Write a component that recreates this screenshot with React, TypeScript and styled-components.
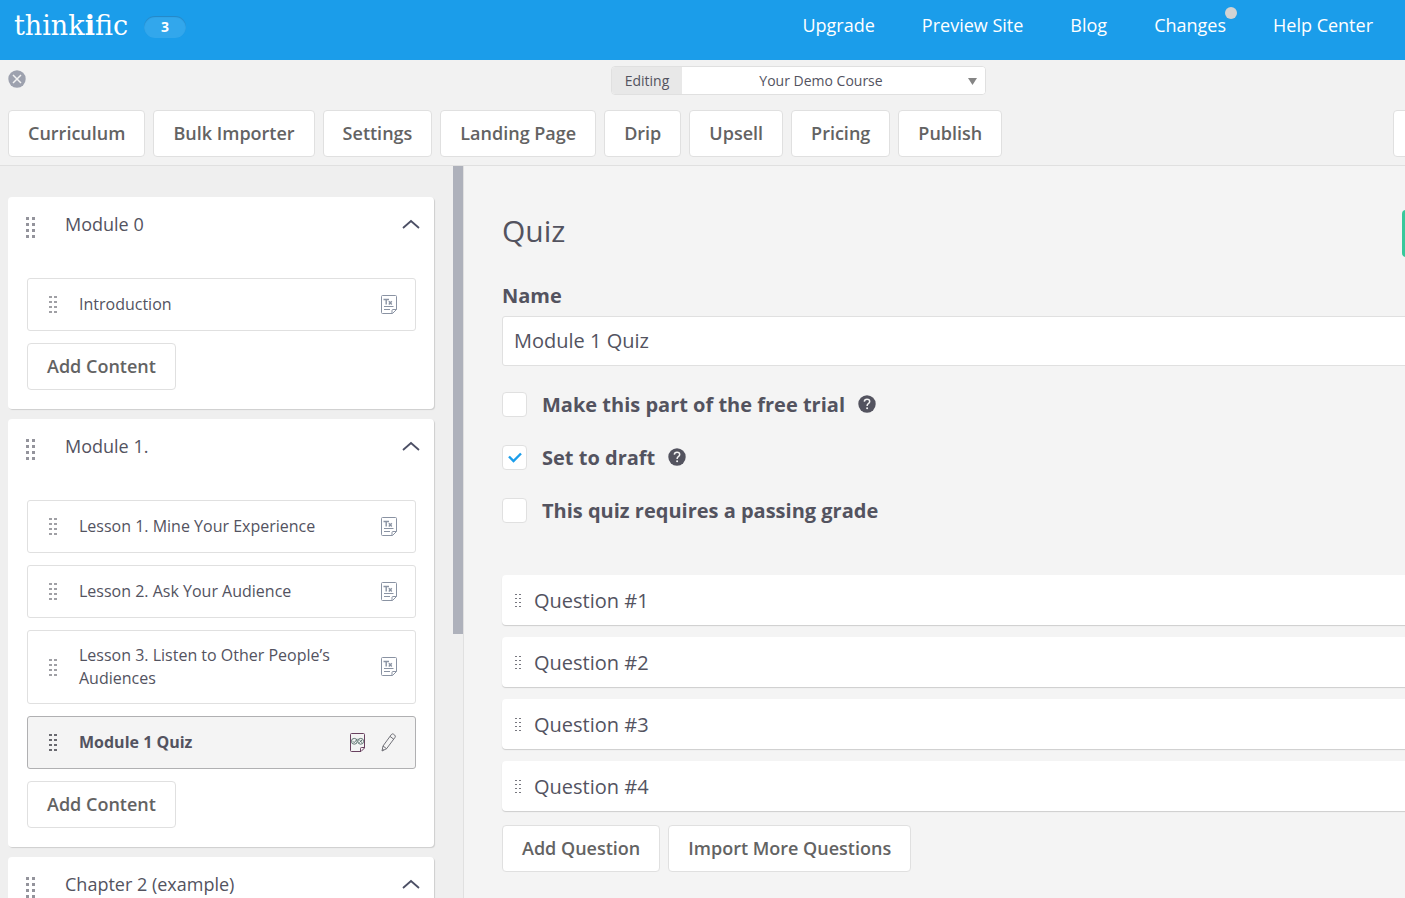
import React, { useState } from "react";
import styled, { createGlobalStyle } from "styled-components";

const Global = createGlobalStyle`
  *, *::before, *::after { box-sizing: border-box; }
  html, body, #root { height: 100%; margin: 0; }
  body { background: #f4f4f4; color: #53535f; font-family: "Open Sans", "Noto Sans", sans-serif; font-size: 16px; }
  button, input, select { font: inherit; color: inherit; margin: 0; }
  h1, h2, ul { margin: 0; padding: 0; }
  svg { display: block; flex: none; }
`;

const Page = styled.div`
  display: flex;
  flex-direction: column;
  height: 100vh;
  overflow: hidden;
`;

const TopBar = styled.header`
  display: flex;
  align-items: flex-start;
  flex: none;
  height: 60px;
  padding: 0 32px 0 14px;
  background: #1b9dea;
  color: #fff;
`;

const Logo = styled.a`
  color: #fff;
  font-family: "DejaVu Serif", serif;
  font-size: 27px;
  line-height: 52px;
  text-decoration: none;
`;

const Count = styled.span`
  width: 42px;
  height: 22px;
  margin: 16px 0 0 16px;
  border-radius: 11px;
  background: #32a7ec;
  box-shadow: inset 0 1px 1px rgba(0, 60, 110, 0.3);
  font-size: 14px;
  font-weight: 700;
  line-height: 22px;
  text-align: center;
`;

const Nav = styled.nav`
  display: flex;
  gap: 47px;
  margin-left: auto;
`;

const NavLink = styled.a`
  position: relative;
  color: #fff;
  font-size: 18px;
  line-height: 50px;
  text-decoration: none;
`;

const Dot = styled.span`
  position: absolute;
  top: 7px;
  right: -11px;
  width: 12px;
  height: 12px;
  border-radius: 50%;
  background: #d3d3d3;
`;

const Toolbar = styled.section`
  flex: none;
  width: calc(100% + 192px);
  padding: 6px 8px 8px;
  border-bottom: 1px solid #e0e0e0;
  background: #f2f2f2;
`;

const PickerRow = styled.div`
  display: grid;
  grid-template-columns: 1fr auto 1fr;
  align-items: start;
  height: 44px;
`;

const CloseButton = styled.button`
  width: 18px;
  height: 18px;
  margin-top: 4px;
  padding: 0;
  border: 0;
  background: none;
`;

const Picker = styled.div`
  position: relative;
  display: flex;
  height: 29px;
  border: 1px solid #e0e0e0;
  border-radius: 4px;
  background: #fff;
  font-size: 14px;
  line-height: 27px;
  overflow: hidden;
`;

const PickerLabel = styled.label`
  width: 70px;
  background: #e8e8e8;
  text-align: center;
`;

const PickerSelect = styled.select`
  width: 303px;
  padding: 0 25px 0 0;
  border: 0;
  background: #fff;
  appearance: none;
  text-align: center;
  text-align-last: center;
`;

const PickerArrow = styled.svg`
  position: absolute;
  right: 8px;
  top: 11px;
  pointer-events: none;
`;

const TabRow = styled.div`
  display: flex;
  gap: 8px;
`;

const Button = styled.button`
  height: 47px;
  padding: 0 19px 2px;
  border: 1px solid #e0e0e0;
  border-radius: 4px;
  background: #fff;
  color: #636363;
  font-size: 18px;
  font-weight: 600;
  white-space: nowrap;
`;

const EndButton = styled(Button)`
  width: 196px;
  margin-left: auto;
`;

const Workspace = styled.div`
  display: flex;
  flex: 1;
  min-height: 0;
  width: calc(100% + 192px);
`;

const Sidebar = styled.aside`
  display: flex;
  flex: none;
  width: 464px;
  border-right: 1px solid #e0e0e0;
  background: #efefef;
`;

const Modules = styled.div`
  display: flex;
  flex: 1;
  flex-direction: column;
  gap: 10px;
  padding: 31px 19px 0 8px;
  overflow: hidden;
`;

const ScrollThumb = styled.div`
  width: 10px;
  height: 64%;
  background: #aeb1bb;
`;

const ModuleCard = styled.section`
  flex: none;
  padding: 0 18px 19px 19px;
  border-radius: 4px;
  background: #fff;
  box-shadow: 1px 1px 1px rgba(0, 0, 0, 0.14);
`;

const ModuleHeader = styled.div`
  display: flex;
  align-items: flex-start;
  height: 81px;
  margin: 0 -4px 0 -1px;
`;

const ModuleTitle = styled.h2`
  flex: 1;
  margin-left: 30px;
  font-size: 18px;
  font-weight: 400;
  line-height: 55px;
`;

const Handle = styled.span`
  padding-top: 20px;
`;

const Toggle = styled.button`
  padding: 22px 0;
  border: 0;
  background: none;
`;

const Lessons = styled.ul`
  display: flex;
  flex-direction: column;
  gap: 12px;
  margin-bottom: 12px;
  list-style: none;
`;

const Lesson = styled.li<{ $active?: boolean }>`
  display: flex;
  align-items: center;
  min-height: 53px;
  padding: 13px 18px 13px 21px;
  border: 1px solid ${(p) => (p.$active ? "#b0b0b2" : "#e0e0e0")};
  border-radius: 3px;
  background: ${(p) => (p.$active ? "#f4f4f4" : "#fff")};
  font-weight: ${(p) => (p.$active ? 700 : 400)};
  line-height: 23px;
`;

const LessonName = styled.span`
  flex: 1;
  margin: 0 16px 0 22px;
`;

const LessonIcons = styled.span`
  display: flex;
  align-items: center;
  gap: 16px;
`;

const Main = styled.main`
  flex: 1;
  min-width: 0;
  padding: 44px 38px;
`;

const TitleRow = styled.div`
  display: flex;
  align-items: flex-start;
  justify-content: space-between;
  height: 47px;
`;

const Title = styled.h1`
  font-size: 30px;
  font-weight: 400;
  line-height: 42px;
`;

const SaveButton = styled.button`
  width: 157px;
  height: 47px;
  border: 0;
  border-radius: 4px;
  background: #36c99b;
`;

const FieldLabel = styled.label`
  display: block;
  margin: 25px 0 7px;
  font-size: 20px;
  font-weight: 700;
  line-height: 27px;
`;

const TextInput = styled.input`
  display: block;
  width: 100%;
  height: 50px;
  padding: 0 11px 2px;
  border: 1px solid #e0e0e0;
  border-radius: 3px;
  background: #fff;
  font-size: 20px;
`;

const Options = styled.div`
  margin: 12px 0 38px;
`;

const Option = styled.div`
  display: flex;
  align-items: center;
  height: 53px;
`;

const OptionLabel = styled.label`
  display: flex;
  align-items: center;
  gap: 15px;
  font-size: 20px;
  font-weight: 700;
`;

const Box = styled.span`
  position: relative;
  display: flex;
`;

const Check = styled.input`
  width: 25px;
  height: 25px;
  border: 1px solid #e0e0e0;
  border-radius: 4px;
  background: #fff;
  appearance: none;
`;

const Tick = styled.svg`
  position: absolute;
  left: 6px;
  top: 7px;
  pointer-events: none;
`;

const Help = styled.button`
  margin: 0 0 2px 13px;
  padding: 0;
  border: 0;
  background: none;
`;

const Questions = styled.ul`
  display: flex;
  flex-direction: column;
  gap: 12px;
  list-style: none;
`;

const Question = styled.li`
  display: flex;
  align-items: center;
  gap: 13px;
  height: 50px;
  padding: 0 13px;
  border-radius: 4px;
  background: #fff;
  box-shadow: 0 1px 1px rgba(0, 0, 0, 0.16);
  font-size: 20px;
`;

const Actions = styled.div`
  display: flex;
  gap: 8px;
  margin-top: 14px;
`;

type GripProps = { size: "large" | "medium" | "small"; color: string };
const grips = {
  large: { w: 3, h: 3, dx: 6, dy: 6 },
  medium: { w: 3, h: 2, dx: 5, dy: 5 },
  small: { w: 2, h: 1, dx: 4, dy: 4 },
};

function Grip({ size, color }: GripProps) {
  const g = grips[size];
  const width = g.dx + g.w;
  const height = g.dy * 3 + g.h;
  return (
    <svg width={width} height={height} fill={color} shapeRendering="crispEdges" aria-hidden="true">
      {[0, 1, 2, 3].map((row) =>
        [0, 1].map((col) => (
          <rect key={`${row}-${col}`} x={col * g.dx} y={row * g.dy} width={g.w} height={g.h} />
        ))
      )}
    </svg>
  );
}

function TextIcon() {
  return (
    <svg width="16" height="20" viewBox="0 0 16 20" fill="none" stroke="#8a93a3" aria-hidden="true">
      <path d="M1.500 .5h13q1 0 1 1v13l-4 4H1.500q-1 0-1-1v-16q0-1 1-1z" />
      <path d="M15.500 14.500h-3.500q-1 0-1 1v3" />
      <path d="M2.500 4.500h5.500M5.200 4.500v5M7.800 6.300l3 3.200M10.800 6.300l-3 3.200" strokeWidth="1.400" />
      <path d="M3 11.500h9.500M3 14.500h6" />
    </svg>
  );
}

function QuizIcon() {
  return (
    <svg width="15" height="19" viewBox="0 0 15 19" fill="none" aria-hidden="true">
      <path d="M1.500 .5h12q1 0 1 1v13.500l-3.500 3.500H1.500q-1 0-1-1v-16q0-1 1-1z" stroke="#68415f" />
      <path d="M14.500 14.500h-3q-1 0-1 1v3" stroke="#68415f" />
      <g stroke="#5e7672">
        <circle cx="4.300" cy="8.300" r="2.900" />
        <circle cx="10.700" cy="8.300" r="2.900" />
        <path d="M2.800 8.200l1.400 1.500L7.500 5.800M9.400 7l2.600 2.600M12 7L9.400 9.600" />
      </g>
    </svg>
  );
}

function PencilIcon() {
  return (
    <svg width="16" height="19" viewBox="0 0 16 19" fill="none" stroke="#62626a" strokeWidth=".9" strokeLinejoin="round" aria-hidden="true">
      <path d="M1 18l1-5L10.300 1.600q1-1.300 2.400-.3l1 .8q1.200 1 .3 2.300L5.600 15.700z" />
      <path d="M2 13l3.600 2.700M9 3.400l3.700 2.800M1.500 16l1.300 1" />
    </svg>
  );
}

function Chevron() {
  return (
    <svg width="18" height="10" viewBox="0 0 18 10" fill="none" stroke="#4c4f65" strokeWidth="1.800" aria-hidden="true">
      <path d="M1 9l8-7 8 7" />
    </svg>
  );
}

function HelpIcon() {
  return (
    <svg width="18" height="18" viewBox="0 0 18 18" fill="none" aria-hidden="true">
      <circle cx="9" cy="9" r="8.700" fill="#53535f" />
      <path d="M6.300 6.600Q6.500 4.300 9 4.300q2.700 0 2.700 2.200 0 1.200-1.400 2.100Q9.100 9.400 9.100 11" stroke="#f4f4f4" strokeWidth="1.500" />
      <circle cx="9.100" cy="13.300" r="1" fill="#f4f4f4" />
    </svg>
  );
}

type LessonData = { name: string; quiz?: boolean };
const modules: { title: string; lessons: LessonData[] }[] = [
  { title: "Module 0", lessons: [{ name: "Introduction" }] },
  {
    title: "Module 1.",
    lessons: [
      { name: "Lesson 1. Mine Your Experience" },
      { name: "Lesson 2. Ask Your Audience" },
      { name: "Lesson 3. Listen to Other People’s Audiences" },
      { name: "Module 1 Quiz", quiz: true },
    ],
  },
  { title: "Chapter 2 (example)", lessons: [] },
];

const tabs = ["Curriculum", "Bulk Importer", "Settings", "Landing Page", "Drip", "Upsell", "Pricing", "Publish"];

const options = [
  { id: "trial", label: "Make this part of the free trial", help: true, on: false },
  { id: "draft", label: "Set to draft", help: true, on: true },
  { id: "grade", label: "This quiz requires a passing grade", help: false, on: false },
];

function OptionRow({ id, label, help, on }: (typeof options)[number]) {
  const [checked, setChecked] = useState(on);
  return (
    <Option>
      <OptionLabel htmlFor={id}>
        <Box>
          <Check id={id} type="checkbox" checked={checked} onChange={() => setChecked(!checked)} />
          {checked && (
            <Tick width="14" height="11" viewBox="0 0 14 11" fill="none" stroke="#1b9dea" strokeWidth="2.400" aria-hidden="true">
              <path d="M1 4.500l4.500 4.500L13 1.500" />
            </Tick>
          )}
        </Box>
        {label}
      </OptionLabel>
      {help && (
        <Help type="button" aria-label={`About: ${label}`}>
          <HelpIcon />
        </Help>
      )}
    </Option>
  );
}

export default function App() {
  const [name, setName] = useState("Module 1 Quiz");
  return (
    <Page>
      <Global />
      <TopBar>
        <Logo href="#home">
          think<b>i</b>fic
        </Logo>
        <Count>3</Count>
        <Nav>
          <NavLink href="#upgrade">Upgrade</NavLink>
          <NavLink href="#preview">Preview Site</NavLink>
          <NavLink href="#blog">Blog</NavLink>
          <NavLink href="#changes">
            Changes
            <Dot />
          </NavLink>
          <NavLink href="#help">Help Center</NavLink>
        </Nav>
      </TopBar>

      <Toolbar>
        <PickerRow>
          <CloseButton type="button" aria-label="Close">
            <svg width="18" height="18" viewBox="0 0 18 18" aria-hidden="true">
              <circle cx="9" cy="9" r="8.700" fill="#9da1ae" />
              <path d="M5 5l8 8M13 5l-8 8" stroke="#f2f2f2" strokeWidth="1.500" />
            </svg>
          </CloseButton>
          <Picker>
            <PickerLabel htmlFor="course">Editing</PickerLabel>
            <PickerSelect id="course" defaultValue="demo">
              <option value="demo">Your Demo Course</option>
            </PickerSelect>
            <PickerArrow width="9" height="7" viewBox="0 0 9 7" fill="#858585" aria-hidden="true">
              <path d="M0 0h9L4.500 7z" />
            </PickerArrow>
          </Picker>
        </PickerRow>
        <TabRow>
          {tabs.map((tab) => (
            <Button type="button" key={tab}>
              {tab}
            </Button>
          ))}
          <EndButton type="button" aria-label="Preview course" />
        </TabRow>
      </Toolbar>

      <Workspace>
        <Sidebar>
          <Modules>
            {modules.map((m) => (
              <ModuleCard key={m.title}>
                <ModuleHeader>
                  <Handle>
                    <Grip size="large" color="#94949c" />
                  </Handle>
                  <ModuleTitle>{m.title}</ModuleTitle>
                  <Toggle type="button" aria-label={`Collapse ${m.title}`}>
                    <Chevron />
                  </Toggle>
                </ModuleHeader>
                {m.lessons.length > 0 && (
                  <>
                    <Lessons>
                      {m.lessons.map((l) => (
                        <Lesson key={l.name} $active={l.quiz}>
                          <Grip size="medium" color={l.quiz ? "#6a6a70" : "#a0a0a5"} />
                          <LessonName>{l.name}</LessonName>
                          <LessonIcons>
                            {l.quiz ? (
                              <>
                                <QuizIcon />
                                <PencilIcon />
                              </>
                            ) : (
                              <TextIcon />
                            )}
                          </LessonIcons>
                        </Lesson>
                      ))}
                    </Lessons>
                    <Button type="button">Add Content</Button>
                  </>
                )}
              </ModuleCard>
            ))}
          </Modules>
          <ScrollThumb />
        </Sidebar>

        <Main>
          <TitleRow>
            <Title>Quiz</Title>
            <SaveButton type="button" aria-label="Save" />
          </TitleRow>
          <FieldLabel htmlFor="quiz-name">Name</FieldLabel>
          <TextInput id="quiz-name" value={name} onChange={(e) => setName(e.target.value)} />
          <Options>
            {options.map((o) => (
              <OptionRow key={o.id} {...o} />
            ))}
          </Options>
          <Questions>
            {[1, 2, 3, 4].map((n) => (
              <Question key={n}>
                <Grip size="small" color="#77777f" />
                Question #{n}
              </Question>
            ))}
          </Questions>
          <Actions>
            <Button type="button">Add Question</Button>
            <Button type="button">Import More Questions</Button>
          </Actions>
        </Main>
      </Workspace>
    </Page>
  );
}
